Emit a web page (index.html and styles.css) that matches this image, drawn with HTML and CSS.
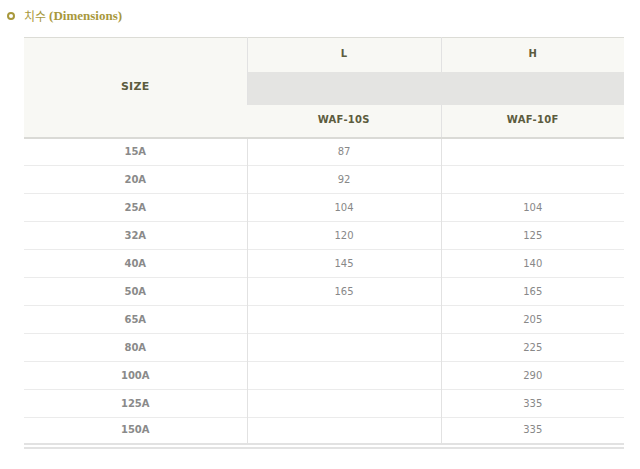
FILE: index.html
```html
<!DOCTYPE html>
<html lang="ko">
<head>
<meta charset="utf-8">
<link rel="stylesheet" href="styles.css">
</head>
<body>
<h2 class="title"><span class="bullet"></span><span class="ko">치수</span> (Dimensions)</h2>
<table class="dim">
  <colgroup><col class="c1"><col class="c2"><col class="c3"></colgroup>
  <thead>
    <tr class="h1"><th rowspan="3" class="size">SIZE</th><th>L</th><th>H</th></tr>
    <tr class="h2"><th colspan="2" class="band"></th></tr>
    <tr class="h3"><th>WAF-10S</th><th>WAF-10F</th></tr>
  </thead>
  <tbody>
    <tr><th>15A</th><td>87</td><td></td></tr>
    <tr><th>20A</th><td>92</td><td></td></tr>
    <tr><th>25A</th><td>104</td><td>104</td></tr>
    <tr><th>32A</th><td>120</td><td>125</td></tr>
    <tr><th>40A</th><td>145</td><td>140</td></tr>
    <tr><th>50A</th><td>165</td><td>165</td></tr>
    <tr><th>65A</th><td></td><td>205</td></tr>
    <tr><th>80A</th><td></td><td>225</td></tr>
    <tr><th>100A</th><td></td><td>290</td></tr>
    <tr><th>125A</th><td></td><td>335</td></tr>
    <tr><th>150A</th><td></td><td>335</td></tr>
  </tbody>
</table>
</body>
</html>
```
FILE: styles.css
```css
html, body { margin: 0; padding: 0; background: #fff; }
body { font-family: "Liberation Sans", Arial, sans-serif; }

.title {
  margin: 0;
  padding: 4px 0 0 7px;
  height: 27px;
  box-sizing: border-box;
  font-family: "Liberation Serif", "Noto Sans CJK KR", serif;
  font-size: 13px;
  font-weight: bold;
  color: #a8983c;
  display: flex;
  align-items: center;
  line-height: 16px;
}
.bullet {
  width: 4px; height: 4px;
  border: 2px solid #a8983c;
  border-radius: 50%;
  margin-right: 9px;
}
.ko {
  font-family: "Noto Sans CJK KR", sans-serif;
  font-weight: normal;
  margin-right: 3px;
  font-size: 12px;
}

.dim {
  margin: 10px 0 0 24px;
  width: 600px;
  border-collapse: collapse;
  table-layout: fixed;
  border-top: 1px solid #dcdcd6;
  border-bottom: 6px double #e2e2e2;
  font-size: 11px;
}
.c1 { width: 223px; }
.c2 { width: 194px; }
.c3 { width: 183px; }

.dim th, .dim td {
  text-align: center;
  padding: 0 0 1px;
  border-left: 1px solid #e2e2e2;
}
.dim tr > :first-child { border-left: none; }
.dim .h2 > :first-child { border-left: 1px solid #e2e2e2; }

.dim thead tr { height: 33px; }
.dim thead .h1 { height: 34px; }
.dim thead th {
  background: #f8f8f4;
  color: #5c5c3e;
  font-family: "DejaVu Sans", sans-serif;
  font-weight: bold;
  font-size: 10px;
  letter-spacing: 0.3px;
  padding-bottom: 2px;
}
.dim thead .band { background: #e4e4e2; }
.dim thead .h3 th { border-bottom: 2px solid #dadad6; }
.dim thead .size { border-bottom: 2px solid #dadad6; font-size: 11px; }

.dim tbody tr { height: 28px; }
.dim tbody tr + tr > * { border-top: 1px solid #ebebeb; }
.dim tbody th {
  font-family: "DejaVu Sans", sans-serif;
  font-weight: bold;
  font-size: 10px;
  color: #8a8a8a;
}
.dim tbody td {
  font-family: "DejaVu Sans", sans-serif;
  font-size: 10px;
  color: #888;
}
```
